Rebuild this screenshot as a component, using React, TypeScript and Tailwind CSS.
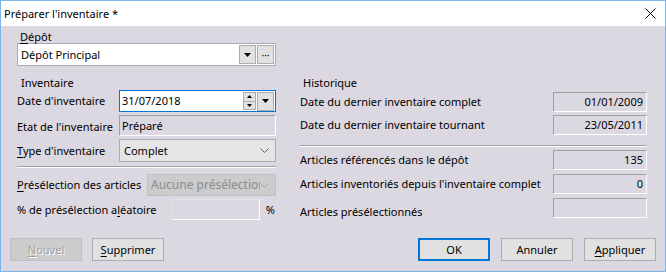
import React from 'react';

const sunken = 'border border-t-[#a0a0a0] border-l-[#a0a0a0] border-b-white border-r-white';

function U({ children }: { children: React.ReactNode }) {
  return <span className="underline decoration-1 underline-offset-[2px]">{children}</span>;
}

function ArrowDown({ color = '#000' }: { color?: string }) {
  return (
    <svg width="7" height="4" viewBox="0 0 7 4">
      <path d="M0 0H7L3.5 4Z" fill={color} />
    </svg>
  );
}

function Chevron({ color = '#606060' }: { color?: string }) {
  return (
    <svg width="9" height="5" viewBox="0 0 9 5">
      <path d="M0.5 0.5L4.5 4.5L8.5 0.5" fill="none" stroke={color} strokeWidth="1" />
    </svg>
  );
}

function SmallBtn({ children }: { children: React.ReactNode }) {
  return (
    <div className="w-[17px] h-[19px] flex items-center justify-center bg-[#e1e1e1] border border-[#adadad] text-[10px] leading-none">
      {children}
    </div>
  );
}

function Spinner() {
  return (
    <div className="w-[13px] h-[18px] flex flex-col border border-[#adadad] bg-[#e1e1e1]">
      <div className="flex-1 flex items-center justify-center border-b border-[#adadad]">
        <svg width="5" height="3" viewBox="0 0 5 3">
          <path d="M0 3H5L2.5 0Z" fill="#000" />
        </svg>
      </div>
      <div className="flex-1 flex items-center justify-center">
        <svg width="5" height="3" viewBox="0 0 5 3">
          <path d="M0 0H5L2.5 3Z" fill="#000" />
        </svg>
      </div>
    </div>
  );
}

function InfoRow({ label, value, className = '' }: { label: string; value?: string; className?: string }) {
  return (
    <div className={`flex items-center h-[20px] ${className}`}>
      <span className="flex-1 whitespace-nowrap">{label}</span>
      <div className={`w-[94px] h-full flex items-center justify-end pr-[3px] ${sunken}`}>{value}</div>
    </div>
  );
}

function Button({ children, primary, disabled }: { children: React.ReactNode; primary?: boolean; disabled?: boolean }) {
  let cls = 'bg-[#e1e1e1] border border-[#adadad]';
  if (primary) cls = 'bg-[#e1e1e1] border-2 border-[#0078d7]';
  if (disabled) cls = 'bg-[#cccccc] border border-[#bfbfbf] text-[#a0a0a0] [text-shadow:1px_1px_0_#fff]';
  return (
    <div className={`w-[72px] h-[23px] flex items-center justify-center ${cls}`}>{children}</div>
  );
}

export default function App() {
  return (
    <div className="w-[666px] h-[272px] flex flex-col border border-[#7db4ea] bg-[#dbd8e2] text-[11px] leading-[14px] text-black font-['Noto_Sans',sans-serif] overflow-hidden whitespace-nowrap">
      <div className="h-[25px] shrink-0 bg-white flex items-center justify-between pl-[3px] pr-[9px]">
        <span>Préparer l'inventaire *</span>
        <svg width="11" height="11" viewBox="0 0 11 11">
          <path d="M0.5 0.5L10.5 10.5M10.5 0.5L0.5 10.5" stroke="#000" strokeWidth="1" />
        </svg>
      </div>

      <div className="flex-1 flex flex-col px-[16px] pt-[4px]">
        {/* depot */}
        <div className="w-[259px]">
          <div className="h-[13px] leading-[13px] pl-[3px]">
            <U>D</U>épôt
          </div>
          <div className="h-[23px] flex items-center bg-white border border-[#a9a9a9] pl-[3px] pr-[1px] gap-[1px]">
            <span className="flex-1">Dépôt Principal</span>
            <SmallBtn>
              <ArrowDown />
            </SmallBtn>
            <SmallBtn>···</SmallBtn>
          </div>
        </div>

        <div className="flex gap-[24px] mt-[10px]">
          {/* inventaire */}
          <div className="w-[259px] flex flex-col">
            <div className="h-[14px] pl-[4px]">Inventaire</div>
            <div className="flex items-center h-[22px]">
              <span className="w-[102px]">Date d'inventaire</span>
              <div className="flex-1 h-full flex items-center gap-[1px] bg-white border border-[#0078d7] pl-[2px] pr-[1px]">
                <span className="flex-1">31/07/2018</span>
                <Spinner />
                <SmallBtn>
                  <ArrowDown />
                </SmallBtn>
              </div>
            </div>
            <div className="flex items-center h-[21px] mt-[3px]">
              <span className="w-[102px] pt-[2px]">Etat de l'inventaire</span>
              <div className={`flex-1 h-full flex items-center pl-[2px] ${sunken}`}>Préparé</div>
            </div>
            <div className="flex items-center h-[23px] mt-[3px]">
              <span className="w-[102px]">
                <U>T</U>ype d'inventaire
              </span>
              <div className="flex-1 h-full flex items-center bg-[#e5e5e5] border border-[#acacac] pl-[4px] pr-[6px]">
                <span className="flex-1">Complet</span>
                <Chevron />
              </div>
            </div>
            <div className="mt-[4px] h-[2px] border-t border-t-[#a0a0a0] border-b border-b-white" />
            <div className="flex items-center h-[22px] mt-[6px]">
              <span className="w-[130px]">
                <U>P</U>résélection des articles
              </span>
              <div className="flex-1 min-w-0 h-full flex items-center bg-[#cccccc] border border-[#bfbfbf] pl-[3px] pr-[6px] text-[#8b8b8b]">
                <span className="flex-1 min-w-0 overflow-hidden text-[12px]">Aucune présélection</span>
                <Chevron color="#a8a8a8" />
              </div>
            </div>
            <div className="flex items-center h-[21px] mt-[3px]">
              <span className="w-[155px]">
                % de présélection a<U>l</U>éatoire
              </span>
              <div className="w-[88px] h-full border border-white border-t-[#e4e4e4] border-l-[#e4e4e4]" />
              <span className="ml-auto mr-[1px]">%</span>
            </div>
          </div>

          {/* historique */}
          <div className="w-[347px] flex flex-col">
            <div className="h-[14px] pl-[3px]">Historique</div>
            <InfoRow className="mt-[2px]" label="Date du dernier inventaire complet" value="01/01/2009" />
            <InfoRow className="mt-[3px]" label="Date du dernier inventaire tournant" value="23/05/2011" />
            <div className="mt-[10px] h-[2px] border-t border-t-[#a0a0a0] border-b border-b-white" />
            <InfoRow className="mt-[3px]" label="Articles référencés dans le dépôt" value="135" />
            <InfoRow className="mt-[4px]" label="Articles inventoriés depuis l'inventaire complet" value="0" />
            <div className="flex items-start h-[20px] mt-[4px]">
              <span className="flex-1 pt-[7px]">Articles présélectionnés</span>
              <div className={`w-[94px] h-full ${sunken}`} />
            </div>
          </div>
        </div>

        <div className="flex items-center mt-[18px] -mx-[7px]">
          <div className="flex gap-[10px]">
            <Button disabled>
              <U>N</U>ouvel
            </Button>
            <Button>
              <U>S</U>upprimer
            </Button>
          </div>
          <div className="ml-auto flex gap-[11px]">
            <Button primary>OK</Button>
            <Button>Annuler</Button>
            <Button>
              <U>A</U>ppliquer
            </Button>
          </div>
        </div>
      </div>
    </div>
  );
}
